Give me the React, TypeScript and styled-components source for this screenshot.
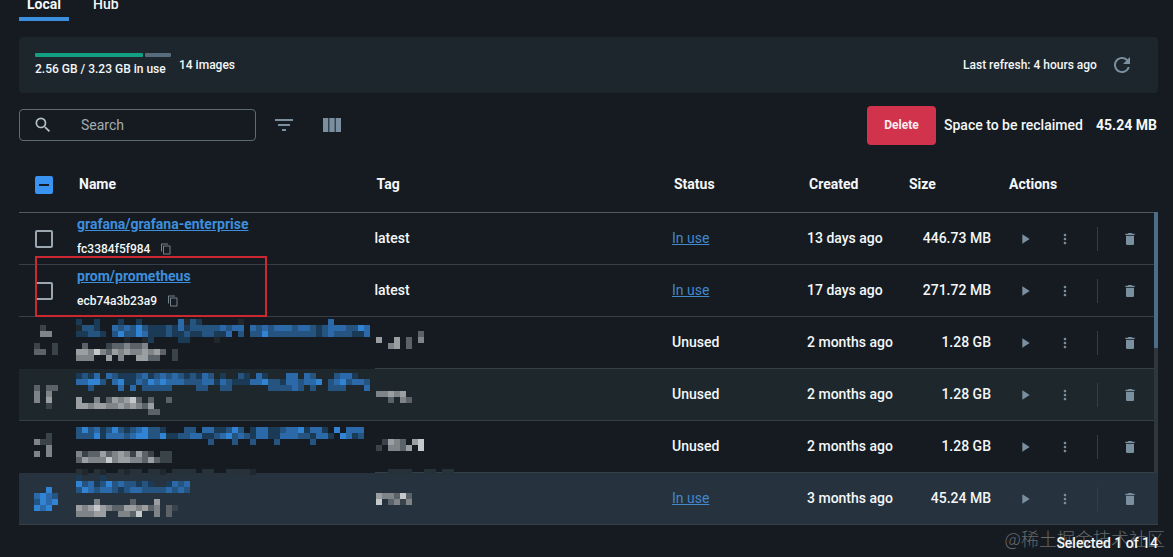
import React from "react";
import styled, { createGlobalStyle } from "styled-components";
import {
  MdContentCopy,
  MdDelete,
  MdFilterList,
  MdMoreVert,
  MdPlayArrow,
  MdRefresh,
  MdSearch,
  MdViewColumn,
} from "react-icons/md";

const GlobalStyle = createGlobalStyle`
  * { box-sizing: border-box; }
  body {
    margin: 0;
    background: #151b21;
    color: #f4f7f8;
    font-family: Roboto, "Liberation Sans", sans-serif;
    font-size: 14px;
    font-weight: 500;
    line-height: 20px;
    overflow: hidden;
  }
  button { font: inherit; border: 0; padding: 0; cursor: pointer; }
`;

const Page = styled.main`
  padding: 0 15px 0 19px;
`;

const Tabs = styled.nav`
  display: flex;
  align-items: flex-end;
  height: 21px;
  overflow: hidden;
`;

const Tab = styled.button<{ $active?: boolean }>`
  height: 30px;
  padding: 0 8px;
  margin-right: 16px;
  background: none;
  color: #f4f7f8;
  font-weight: ${(p) => (p.$active ? 700 : 500)};
  border-bottom: 4px solid ${(p) => (p.$active ? "#3c8fdc" : "transparent")};
`;

const Summary = styled.section`
  display: flex;
  align-items: center;
  gap: 8px;
  height: 56px;
  margin-top: 16px;
  padding: 0 24px 0 16px;
  border-radius: 4px;
  background: #1d262d;
  font-size: 12px;
  line-height: 16px;
`;

const Usage = styled.div`
  display: flex;
  flex-direction: column;
  gap: 4px;
  min-width: 136px;
`;

const UsageBar = styled.div`
  display: flex;
  gap: 2px;
  height: 4px;
`;

const Segment = styled.span<{ $grow: number; $color: string }>`
  flex: ${(p) => p.$grow};
  border-radius: 1px;
  background: ${(p) => p.$color};
`;

const Refresh = styled.div`
  display: flex;
  align-items: center;
  gap: 8px;
  margin-left: auto;
`;

const Label = styled.span<{ $width: number }>`
  min-width: ${(p) => p.$width}px;
`;

const IconButton = styled.button<{ $width?: number }>`
  display: flex;
  align-items: center;
  justify-content: center;
  width: ${(p) => p.$width ?? 24}px;
  height: 24px;
  background: none;
  color: #7a8f9f;
`;

const Toolbar = styled.section`
  display: flex;
  align-items: center;
  height: 39px;
  margin-top: 13px;
  padding-bottom: 1px;
`;

const SearchBox = styled.label`
  display: flex;
  align-items: center;
  gap: 28px;
  width: 237px;
  height: 32px;
  margin-right: 16px;
  padding: 0 13px;
  border: 1px solid #5f6b73;
  border-radius: 4px;
  color: #b4bfc6;
`;

const SearchInput = styled.input`
  flex: 1;
  min-width: 0;
  padding: 0;
  border: 0;
  outline: 0;
  background: none;
  color: inherit;
  font: inherit;
  font-weight: 400;
  &::placeholder { color: #a3adb4; opacity: 1; }
`;

const Reclaim = styled.div`
  display: flex;
  align-items: center;
  gap: 8px;
  margin-left: auto;
  white-space: nowrap;
`;

const DeleteButton = styled.button`
  width: 69px;
  height: 39px;
  border-radius: 4px;
  background: #d1334c;
  color: #fbeef0;
  font-size: 12px;
  font-weight: 700;
`;

const TableArea = styled.section`
  position: relative;
  margin-top: 12px;
`;

const Table = styled.table`
  width: 100%;
  table-layout: fixed;
  border-collapse: separate;
  border-spacing: 0;
`;

const Col = styled.col<{ $width: number }>`
  width: ${(p) => p.$width}px;
`;

const HeadCell = styled.th<{ $control?: boolean }>`
  height: 56px;
  padding: ${(p) => (p.$control ? "0" : "0 0 2px 2px")};
  border-bottom: 1px solid #505a61;
  text-align: left;
  font-weight: 700;
`;

const Row = styled.tr<{ $tone?: "hover" | "selected" }>`
  background: ${(p) =>
    p.$tone === "selected" ? "#26323d" : p.$tone === "hover" ? "#1d272c" : "transparent"};
`;

const Cell = styled.td<{ $line?: boolean }>`
  position: relative;
  height: 52px;
  padding: 0;
  border-bottom: 1px solid ${(p) => (p.$line === false ? "transparent" : "#353f45")};
`;

const TextCell = styled(Cell)<{ $end?: boolean }>`
  padding: 0 ${(p) => (p.$end ? 16 : 0)}px 2px 0;
  text-align: ${(p) => (p.$end ? "right" : "left")};
  white-space: nowrap;
`;

const CheckCell = styled.div`
  display: flex;
  padding-left: 16px;
`;

const Check = styled.input`
  appearance: none;
  display: grid;
  place-items: center;
  width: 18px;
  height: 18px;
  margin: 0;
  border: 2px solid #9aa7b1;
  border-radius: 2px;
  &:indeterminate {
    border-color: #3894f0;
    background: #3894f0;
  }
  &:indeterminate::after {
    content: "";
    width: 10px;
    height: 2px;
    background: #151b21;
  }
`;

const NameStack = styled.div`
  display: flex;
  flex-direction: column;
  align-items: flex-start;
  gap: 6px;
  height: 51px;
  padding-top: 1px;
  white-space: nowrap;
`;

const IdLine = styled.div`
  display: flex;
  align-items: center;
  gap: 10px;
  font-size: 12px;
  line-height: 18px;
`;

const CopyButton = styled.button`
  display: flex;
  background: none;
  color: #76828b;
`;

const Link = styled.a<{ $strong?: boolean }>`
  color: ${(p) => (p.$strong ? "#3d8fdd" : "#4288ca")};
  font-weight: ${(p) => (p.$strong ? 700 : 400)};
  text-decoration: underline;
`;

const Actions = styled.div`
  display: flex;
  align-items: center;
  gap: 4px;
`;

const Divider = styled.span`
  width: 1px;
  height: 24px;
  margin: 0 10px;
  background: #333e46;
`;

const Highlight = styled.div`
  position: absolute;
  z-index: 1;
  top: -9px;
  left: 16px;
  width: 232px;
  height: 61px;
  border: 2px solid #cb2830;
`;

const ScrollTrack = styled.div`
  position: absolute;
  top: 55px;
  right: 0;
  bottom: 52px;
  width: 4px;
  background: #2f373c;
`;

const ScrollThumb = styled.div`
  height: 136px;
  background: #4b6d88;
`;

const Footer = styled.footer`
  position: relative;
  padding-top: 8px;
  text-align: right;
`;

const Watermark = styled.span`
  position: absolute;
  top: 1px;
  right: -7px;
  color: #66696d;
  font-family: "Noto Sans CJK SC", sans-serif;
  font-size: 18px;
  font-weight: 300;
  line-height: 24px;
  white-space: nowrap;
`;

const FooterText = styled.span`
  position: relative;
`;

const MosaicSvg = styled.svg`
  display: block;
  height: 51px;
  overflow: visible;
`;

/* Shades of the pixelated censor blocks, keyed by the letters of a pattern. */
const shades: Record<string, string> = {
  a: "#1b3a56",
  b: "#24547f",
  c: "#2b69a8",
  d: "#3183d4",
  "1": "#3a4349",
  "2": "#5c6368",
  "3": "#7f8488",
  "4": "#9b9fa2",
  "5": "#c6c9cb",
  f: "#20282e",
  g: "#26313a",
};

/* Each string is one line of 6px blocks; top is the offset inside the row. */
function Mosaic({ lines, top, left }: { lines: string[]; top: number; left: number }) {
  return (
    <MosaicSvg width="100%" height={51} shapeRendering="crispEdges" aria-hidden="true">
      {lines.flatMap((line, y) =>
        [...line].map((ch, x) =>
          shades[ch] ? (
            <rect
              key={`${x}-${y}`}
              x={left + x * 6}
              y={top + y * 6}
              width={6}
              height={6}
              fill={shades[ch]}
            />
          ) : null,
        ),
      )}
    </MosaicSvg>
  );
}

type Masked = { top: number; check: string[]; name: string[]; tag: string[] };
type Image = {
  name?: string;
  id?: string;
  masked?: Masked;
  used?: boolean;
  created: string;
  size: string;
  tone?: "hover" | "selected";
  line?: boolean;
  marked?: boolean;
};

const images: Image[] = [
  {
    name: "grafana/grafana-enterprise",
    id: "fc3384f5f984",
    used: true,
    created: "13 days ago",
    size: "446.73 MB",
  },
  {
    name: "prom/prometheus",
    id: "ecb74a3b23a9",
    used: true,
    created: "17 days ago",
    size: "271.72 MB",
    marked: true,
  },
  {
    created: "2 months ago",
    size: "1.28 GB",
    line: false,
    masked: {
      top: 2,
      check: ["", ".1", ".33", "", "1..1", "22.1"],
      name: [
        "a..a...a..a......cfba......f..............c......",
        "fbba..cbcbdbaaabacabbbbbcbcc.cbcbcccbccbabcccbbdc",
        "aabba.bdbbdcaaabaabaabbaac.b.bbdbbbbbbbbabcbbbaac",
        "........f..fa....aa....f.........................",
        ".2...1223223.....",
        "443532434334342.1",
        "333..4.3..4422..1",
      ],
      tag: ["", "", ".......2", "4..4.2.3", "..34.2"],
    },
  },
  {
    created: "2 months ago",
    size: "1.28 GB",
    tone: "hover",
    masked: {
      top: 4,
      check: ["", "", "2.22", "3.3", "3.4", "..1"],
      name: [
        "abac.cbaaabcabcbcbabacb.a..ba.ca...cc.cb...bcca..",
        "ccddb.cdaacbdcdcccbbbccacbaaaccdbbaccbccd.bcdbccb",
        "..b....c.c.bbbbb....bb..bb......bbbbcb.b..bbb...c",
        "",
        "4..3.243452.2..2.",
        "4434433434324....",
        "............22...",
      ],
      tag: ["", "", "", "33434", "..2.32"],
    },
  },
  {
    created: "2 months ago",
    size: "1.28 GB",
    line: false,
    masked: {
      top: 6,
      check: ["", "..1", "311", "..3", "3.3"],
      name: [
        "bdbcabdbabcdbba...bb.ccaabdb.accaabccdacca.d.ccc",
        "bbbdacccbcddbbdaabbccaabcdbcbaccaacccbbacca.dcab",
        "......................b...b..b...b.....b......",
        "",
        "3122423431421.11.",
        "2433353443324211.",
        "",
        "gf.gf..gfgg.ggf.gggg.gg..ggggf",
      ],
      tag: ["", "", ".1432.45", "1.3324.5", "", "", "", "..gggg..gg.gg"],
    },
  },
  {
    used: true,
    created: "3 months ago",
    size: "45.24 MB",
    tone: "selected",
    masked: {
      top: 2,
      check: ["", "", "..d", "cdcb", "bdcd", "dcd"],
      name: [
        "a...a............",
        "dbcabdbcbbaba..acbc",
        "bdcbccbabccbbbbcbcb",
        "",
        "...3.....2...4...",
        "43454322443423.21",
        "33344..3325..3.2.",
      ],
      tag: ["", "", "", "433252", "5.2313"],
    },
  },
];

function setIndeterminate(el: HTMLInputElement | null) {
  if (el) el.indeterminate = true;
}

export default function App() {
  return (
    <>
      <GlobalStyle />
      <Page>
        <Tabs>
          <Tab $active>Local</Tab>
          <Tab>Hub</Tab>
        </Tabs>

        <Summary>
          <Usage>
            <UsageBar>
              <Segment $grow={108} $color="#139f83" />
              <Segment $grow={26} $color="#566b7b" />
            </UsageBar>
            <span>2.56 GB / 3.23 GB in use</span>
          </Usage>
          <span>14 images</span>
          <Refresh>
            <Label $width={139}>Last refresh: 4 hours ago</Label>
            <IconButton aria-label="Refresh">
              <MdRefresh size={24} />
            </IconButton>
          </Refresh>
        </Summary>

        <Toolbar>
          <SearchBox>
            <MdSearch size={20} />
            <SearchInput type="text" placeholder="Search" aria-label="Search" />
          </SearchBox>
          <IconButton aria-label="Filter">
            <MdFilterList size={24} />
          </IconButton>
          <IconButton $width={72} aria-label="Columns">
            <MdViewColumn size={24} />
          </IconButton>
          <Reclaim>
            <DeleteButton>Delete</DeleteButton>
            <Label $width={144}>Space to be reclaimed</Label>
            <Label as="strong" $width={62}>
              45.24 MB
            </Label>
          </Reclaim>
        </Toolbar>

        <TableArea>
          <Table>
            <colgroup>
              <Col $width={58} />
              <col />
              <col />
              <Col $width={135} />
              <Col $width={100} />
              <Col $width={100} />
              <Col $width={151} />
            </colgroup>
            <thead>
              <tr>
                <HeadCell $control>
                  <CheckCell>
                    <Check
                      type="checkbox"
                      aria-label="Select all images"
                      ref={setIndeterminate}
                    />
                  </CheckCell>
                </HeadCell>
                <HeadCell>Name</HeadCell>
                <HeadCell>Tag</HeadCell>
                <HeadCell>Status</HeadCell>
                <HeadCell>Created</HeadCell>
                <HeadCell>Size</HeadCell>
                <HeadCell>Actions</HeadCell>
              </tr>
            </thead>
            <tbody>
              {images.map((img, i) => (
                <Row key={i} $tone={img.tone}>
                  <Cell $line={img.line}>
                    {img.marked && <Highlight />}
                    {img.masked ? (
                      <Mosaic lines={img.masked.check} top={img.masked.top} left={15} />
                    ) : (
                      <CheckCell>
                        <Check type="checkbox" aria-label={`Select ${img.name}`} />
                      </CheckCell>
                    )}
                  </Cell>
                  <Cell $line={img.line}>
                    {img.masked ? (
                      <Mosaic lines={img.masked.name} top={img.masked.top} left={-1} />
                    ) : (
                      <NameStack>
                        <Link href="#" $strong>
                          {img.name}
                        </Link>
                        <IdLine>
                          {img.id}
                          <CopyButton aria-label="Copy image id">
                            <MdContentCopy size={12} />
                          </CopyButton>
                        </IdLine>
                      </NameStack>
                    )}
                  </Cell>
                  {img.masked ? (
                    <Cell>
                      <Mosaic lines={img.masked.tag} top={img.masked.top} left={1} />
                    </Cell>
                  ) : (
                    <TextCell>latest</TextCell>
                  )}
                  <TextCell>{img.used ? <Link href="#">In use</Link> : "Unused"}</TextCell>
                  <TextCell>{img.created}</TextCell>
                  <TextCell $end>{img.size}</TextCell>
                  <Cell>
                    <Actions>
                      <IconButton $width={36} aria-label="Run">
                        <MdPlayArrow size={16} />
                      </IconButton>
                      <IconButton $width={36} aria-label="More actions">
                        <MdMoreVert size={16} />
                      </IconButton>
                      <Divider />
                      <IconButton $width={36} aria-label="Delete image">
                        <MdDelete size={16} />
                      </IconButton>
                    </Actions>
                  </Cell>
                </Row>
              ))}
            </tbody>
          </Table>
          <ScrollTrack>
            <ScrollThumb />
          </ScrollTrack>
        </TableArea>

        <Footer>
          <Watermark>@稀土掘金技术社区</Watermark>
          <FooterText>Selected 1 of 14</FooterText>
        </Footer>
      </Page>
    </>
  );
}
